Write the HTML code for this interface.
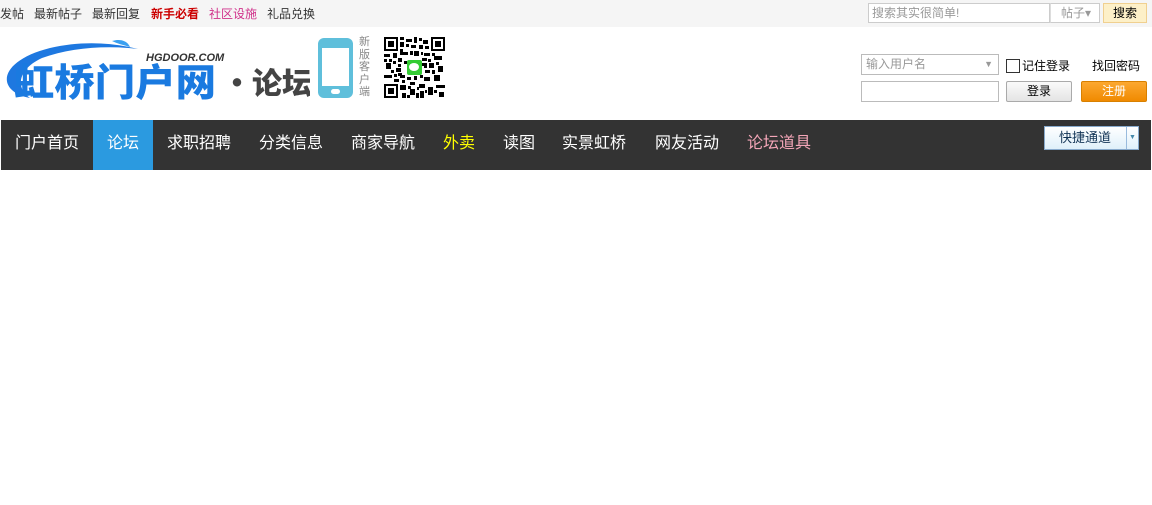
<!DOCTYPE html>
<html><head><meta charset="utf-8"><style>
*{margin:0;padding:0;box-sizing:border-box}
body{width:1152px;height:505px;background:#fff;font-family:"Liberation Sans","Noto Sans CJK SC",sans-serif;font-size:12px;color:#333;position:relative;overflow:hidden}
.top{position:absolute;left:0;top:0;width:1152px;height:27px;background:#f5f5f5}
.top a{position:absolute;top:6px;font-size:12px;color:#333;text-decoration:none;line-height:16px}
.abs{position:absolute}
.nav{position:absolute;left:1px;top:120px;width:1150px;height:50px;background:#333}
.nav span{position:absolute;top:0;height:50px;line-height:48px;font-size:16px;color:#fff}
</style></head><body>
<div class="top">
<a style="left:0">发帖</a><a style="left:34px">最新帖子</a><a style="left:92px">最新回复</a>
<a style="left:151px;color:#c00;font-weight:bold">新手必看</a><a style="left:209px;color:#d0308a">社区设施</a><a style="left:267px">礼品兑换</a>
<div class="abs" style="left:868px;top:3px;width:182px;height:20px;border:1px solid #ccc;background:#fff;color:#999;font-size:12px;line-height:18px;padding-left:3px">搜索其实很简单!</div>
<div class="abs" style="left:1050px;top:3px;width:50px;height:20px;border:1px solid #ccc;border-left:1px solid #ddd;background:#fff;color:#999;line-height:18px;padding-left:10px">帖子▾</div>
<div class="abs" style="left:1103px;top:3px;width:44px;height:20px;border:1px solid #f0d090;background:#fdf0c8;color:#000;line-height:18px;text-align:center">搜索</div>
</div>
<svg class="abs" style="left:0;top:36px" width="310" height="70" viewBox="0 0 310 70">
<path d="M30 62 C-5 55 -2 25 50 12 C80 5 110 6 138 13 C105 9 70 12 42 22 C18 33 15 52 30 62Z" fill="#1e78e0"/>
<path d="M112 5 C122 2 128 6 130 11 C124 9 118 8 112 5Z" fill="#3aa0f0"/>
<text x="146" y="25" font-family="Liberation Sans" font-style="italic" font-weight="bold" font-size="11" fill="#333">HGDOOR.COM</text>
<text x="14" y="60" font-family="Noto Sans CJK SC" font-weight="900" font-size="38" fill="#1a7ae0" textLength="202" lengthAdjust="spacingAndGlyphs">虹桥门户网</text>
<text x="222" y="58" font-family="Noto Sans CJK SC" font-weight="900" font-size="30" fill="#444">·论坛</text>
</svg>
<div class="abs" style="left:318px;top:38px;width:35px;height:60px;background:#5fbfdb;border-radius:6px"></div>
<div class="abs" style="left:322px;top:48px;width:27px;height:38px;background:#fff"></div>
<div class="abs" style="left:331px;top:89px;width:9px;height:5px;border-radius:3px;background:#fff"></div>
<div class="abs" style="left:359px;top:36px;width:14px;font-size:11px;line-height:12.5px;color:#888">新版客户端</div>
<svg class="abs" style="left:384px;top:37px" width="61" height="61" viewBox="0 0 61 61">
<rect width="61" height="61" fill="#fff"/>
<g fill="#000">
<rect x="0" y="0" width="14" height="14"/><rect x="47" y="0" width="14" height="14"/><rect x="0" y="47" width="14" height="14"/>
</g>
<g fill="#fff"><rect x="2" y="2" width="10" height="10"/><rect x="49" y="2" width="10" height="10"/><rect x="2" y="49" width="10" height="10"/></g>
<g fill="#000"><rect x="4" y="4" width="6" height="6"/><rect x="51" y="4" width="6" height="6"/><rect x="4" y="51" width="6" height="6"/>
<path d="M16 0h4v3h-4zM22 2h6v3h-6zM30 0h3v6h-3zM35 1h3v3h-3zM39 3h5v4h-5zM16 5h4v5h-4zM22 7h3v3h-3zM27 8h5v3h-5zM35 8h4v4h-4zM41 9h4v3h-4zM16 12h3v3h-3zM0 17h6v3H0zM9 16h4v5H9zM16 15h8v3h-8zM26 14h3v4h-3zM30 14h5v5h-5zM37 15h2v3h-2zM40 16h6v3h-6zM48 16h3v3h-3zM50 19h8v4h-8zM0 22h3v3H0zM5 22h3v3H5zM9 24h3v3H9zM14 21h4v4h-4zM38 21h5v3h-5zM44 22h3v3h-3zM2 26h5v6H2zM14 27h3v3h-3zM40 26h3v5h-3zM45 26h5v5h-5zM52 25h3v3h-3zM54 29h5v6h-5zM12 31h5v4h-5zM7 33h3v3H7zM41 33h5v3h-5zM48 33h3v4h-3zM0 38h8v3H0zM10 37h3v3h-3zM16 38h5v3h-5zM23 40h4v3h-4zM30 39h3v4h-3zM36 38h3v3h-3zM40 40h6v4h-6zM50 38h6v6h-6zM10 42h5v3h-5zM18 43h3v3h-3zM26 45h5v3h-5zM16 48h6v5h-6zM24 49h3v3h-3zM26 52h5v6h-5zM33 50h2v3h-2zM35 47h6v4h-6zM44 50h5v8h-5zM52 48h9v3h-9zM18 56h4v5h-4zM23 58h3v3h-3zM36 54h4v7h-4zM41 53h2v3h-2zM50 53h3v3h-3zM55 55h5v5h-5zM20 24h3v3h-3zM38 26h3v3h-3zM14 36h4v3h-4zM32 56h3v5h-3z"/></g>
<rect x="23" y="23" width="15" height="15" rx="2" fill="#3c3"/>
<ellipse cx="30" cy="30" rx="5" ry="4" fill="#fff"/>
</svg>
<div class="abs" style="left:861px;top:54px;width:138px;height:21px;border:1px solid #bbb;color:#999;line-height:19px;padding-left:4px;background:#fff">输入用户名<span style="position:absolute;right:5px;top:0;color:#999;font-size:9px">▼</span></div>
<div class="abs" style="left:1006px;top:59px;width:14px;height:14px;border:1px solid #333;background:#fff"></div>
<div class="abs" style="left:1022px;top:57px;color:#000">记住登录</div>
<div class="abs" style="left:1092px;top:57px;color:#000">找回密码</div>
<div class="abs" style="left:861px;top:81px;width:138px;height:21px;border:1px solid #bbb;background:#fff"></div>
<div class="abs" style="left:1006px;top:81px;width:66px;height:21px;border:1px solid #aaa;border-radius:2px;background:linear-gradient(#fafafa,#e4e4e4);text-align:center;line-height:19px;color:#000">登录</div>
<div class="abs" style="left:1081px;top:81px;width:66px;height:21px;border:1px solid #d88000;border-radius:2px;background:linear-gradient(#fca830,#f08a00);text-align:center;line-height:19px;color:#fff">注册</div>
<div class="nav">
<span style="left:92px;width:60px;background:#2b9ae0"></span>
<span style="left:14px">门户首页</span><span style="left:106px">论坛</span><span style="left:166px">求职招聘</span><span style="left:258px">分类信息</span><span style="left:350px">商家导航</span>
<span style="left:442px;color:#ff0">外卖</span><span style="left:502px">读图</span><span style="left:561px">实景虹桥</span><span style="left:654px">网友活动</span><span style="left:746px;color:#f4a6b8">论坛道具</span>
<div class="abs" style="left:1043px;top:6px;width:95px;height:24px;border:1px solid #8ac;background:linear-gradient(#fff,#dff0fa);color:#135;font-size:13px;line-height:22px;padding-left:14px">快捷通道<div style="position:absolute;left:81px;top:0;width:12px;height:22px;border-left:1px solid #9bd;font-size:7px;line-height:22px;color:#48a;text-align:center">▼</div></div>
</div>
</body></html>
